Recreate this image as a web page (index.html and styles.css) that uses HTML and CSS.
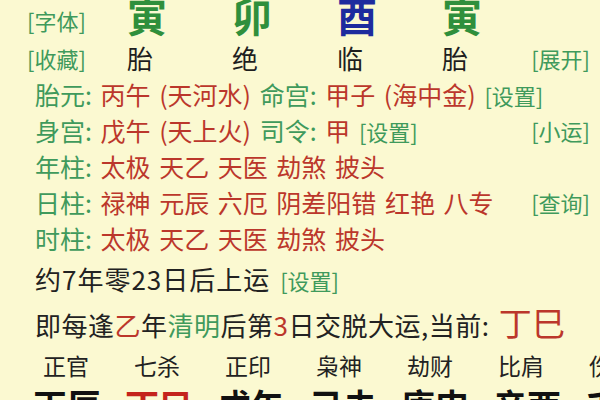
FILE: index.html
```html
<!DOCTYPE html>
<html lang="zh-CN">
<head>
<meta charset="utf-8">
<title>八字排盘</title>
<link rel="stylesheet" href="styles.css">
</head>
<body>
<div class="page">
  <div class="pillars top">
    <span class="link lbl">[字体]</span>
    <span class="big g">寅</span>
    <span class="big g">卯</span>
    <span class="big b">酉</span>
    <span class="big g">寅</span>
    <span></span>
  </div>
  <div class="pillars second">
    <span class="link lbl">[收藏]</span>
    <span class="mid">胎</span>
    <span class="mid">绝</span>
    <span class="mid">临</span>
    <span class="mid">胎</span>
    <span class="link right">[展开]</span>
  </div>

  <div class="line">
    <div class="txt"><span class="key">胎元:</span> <span class="val">丙午 (天河水)</span> <span class="key">命宫:</span> <span class="val">甲子 (海中金)</span> <span class="link">[设置]</span></div>
  </div>
  <div class="line">
    <div class="txt"><span class="key">身宫:</span> <span class="val">戊午 (天上火)</span> <span class="key">司令:</span> <span class="val">甲</span> <span class="link">[设置]</span></div>
    <span class="link">[小运]</span>
  </div>
  <div class="line">
    <div class="txt"><span class="key">年柱:</span> <span class="val">太极 天乙 天医 劫煞 披头</span></div>
  </div>
  <div class="line">
    <div class="txt"><span class="key">日柱:</span> <span class="val">禄神 元辰 六厄 阴差阳错 红艳 八专</span></div>
    <span class="link">[查询]</span>
  </div>
  <div class="line">
    <div class="txt"><span class="key">时柱:</span> <span class="val">太极 天乙 天医 劫煞 披头</span></div>
  </div>

  <div class="line start">
    <div class="txt dark wide">约7年零23日后上运 <span class="link">[设置]</span></div>
  </div>
  <div class="line luck">
    <div class="txt dark wide2">即每逢<span class="val">乙</span>年<span class="key">清明</span>后第<span class="val">3</span>日交脱大运,当前: <span class="val now">丁巳</span></div>
  </div>

  <div class="gods">
    <span>正官</span><span>七杀</span><span>正印</span><span>枭神</span><span>劫财</span><span>比肩</span><span>伤官</span>
  </div>
  <div class="dayun">
    <span>丙辰</span><span class="cur">丁巳</span><span>戊午</span><span>己未</span><span>庚申</span><span>辛酉</span><span>壬戌</span>
  </div>
</div>
</body>
</html>
```

FILE: styles.css
```css
html, body {
  margin: 0;
  padding: 0;
  width: 600px;
  height: 400px;
  overflow: hidden;
  background: #fbf9d1;
}

.page {
  font-family: "Noto Sans CJK SC", "Noto Sans", sans-serif;
  color: #222;
  display: flex;
  flex-direction: column;
  white-space: nowrap;
}

.link {
  color: #3f9a5c;
  font-size: 22px;
  letter-spacing: 0;
}

.pillars {
  display: grid;
  grid-template-columns: 100px 105px 105px 105px 1fr auto;
  padding-left: 27px;
  padding-right: 10px;
  align-items: start;
}

.top {
  height: 46px;
  margin-top: -6px;
}

.top .lbl {
  line-height: 32px;
  margin-top: 10px;
}

.big {
  font-size: 40px;
  font-weight: bold;
  line-height: 42px;
}

.g { color: #2f8f3c; }
.b { color: #1d2b9e; }

.second {
  height: 36px;
  line-height: 36px;
}

.mid {
  font-size: 26px;
  color: #1e1e1e;
}

.right {
  justify-self: end;
}

.line {
  display: flex;
  justify-content: space-between;
  align-items: center;
  height: 36px;
  padding-left: 35px;
  padding-right: 10px;
}

.txt {
  font-size: 25px;
  word-spacing: 3px;
}

.key { color: #3f9a5c; }
.val { color: #bb372b; }
.dark { color: #222; }

.start {
  height: 44px;
}

.wide {
  font-size: 26px;
  letter-spacing: 1px;
}

.luck {
  height: 44px;
}

.wide2 {
  font-size: 26px;
  letter-spacing: 0.5px;
}

.now {
  font-size: 33px;
}

.gods {
  display: flex;
  height: 42px;
  align-items: center;
  padding-left: 43px;
  font-size: 23px;
  color: #222;
}

.gods span {
  flex: 0 0 91px;
}

.dayun {
  display: flex;
  height: 36px;
  align-items: center;
  padding-left: 33px;
  font-size: 34px;
  font-weight: bold;
  color: #111;
}

.dayun span {
  flex: 0 0 92px;
}

.dayun .cur {
  color: #c4241c;
}
```
